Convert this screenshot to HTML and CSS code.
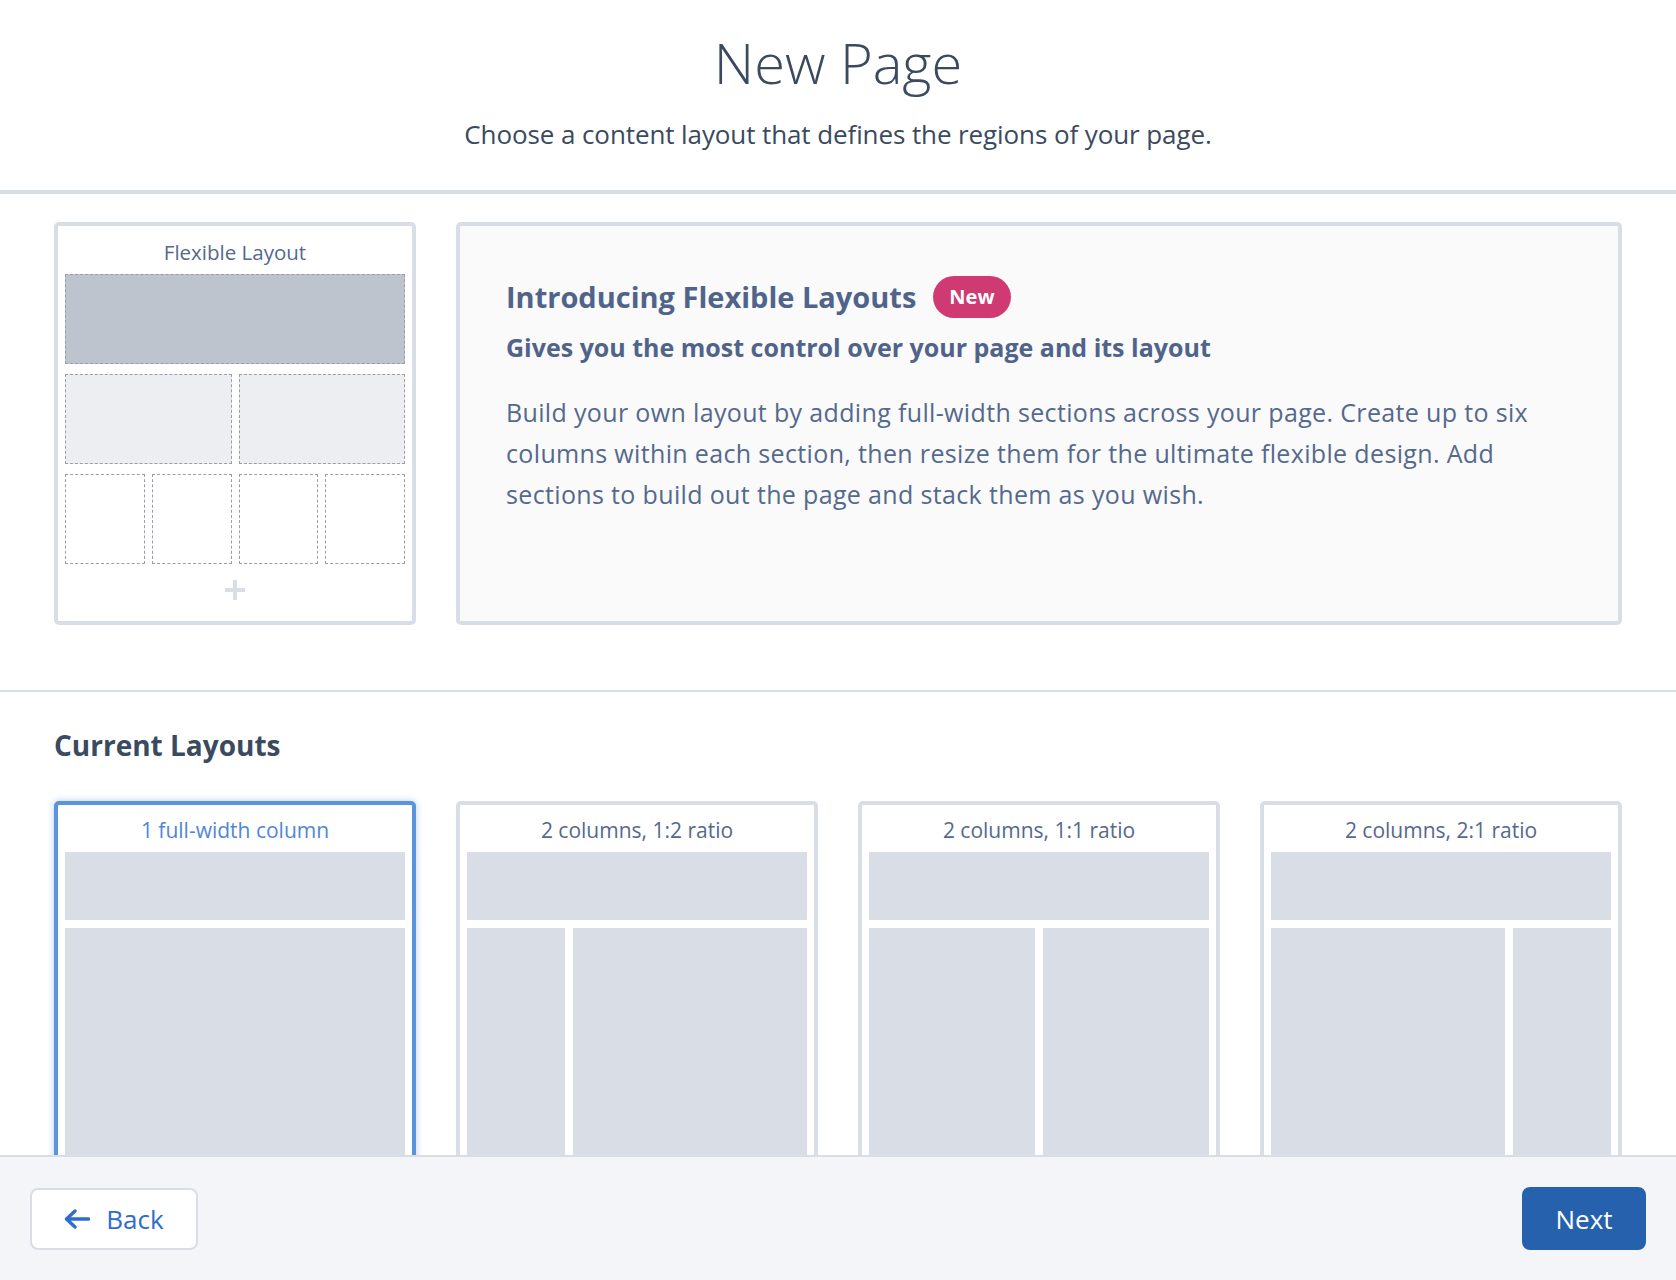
FILE: index.html
```html
<!DOCTYPE html>
<html lang="en">
<head>
<meta charset="utf-8">
<title>New Page</title>
<link rel="stylesheet" href="styles.css">
</head>
<body>
<div class="modal">
  <header class="modal-header">
    <h1 class="title">New Page</h1>
    <p class="subtitle">Choose a content layout that defines the regions of your page.</p>
  </header>

  <main class="modal-body">
    <section class="intro">
      <div class="flex-card">
        <div class="card-label flex-label">Flexible Layout</div>
        <div class="fx-stack">
          <div class="fx fx-dark"></div>
          <div class="fx-row fx-two">
            <div class="fx fx-light"></div>
            <div class="fx fx-light"></div>
          </div>
          <div class="fx-row fx-four">
            <div class="fx"></div>
            <div class="fx"></div>
            <div class="fx"></div>
            <div class="fx"></div>
          </div>
        </div>
        <div class="plus"><span class="plus-h"></span><span class="plus-v"></span></div>
      </div>

      <div class="info-box">
        <div class="info-head">
          <h2 class="info-title">Introducing Flexible Layouts</h2>
          <span class="badge">New</span>
        </div>
        <h3 class="info-sub">Gives you the most control over your page and its layout</h3>
        <p class="info-text">Build your own layout by adding full-width sections across your page. Create up to six columns within each section, then resize them for the ultimate flexible design. Add sections to build out the page and stack them as you wish.</p>
      </div>
    </section>

    <section class="current">
      <h2 class="current-title">Current Layouts</h2>
      <div class="layout-grid">
        <div class="layout-card selected">
          <div class="card-label">1 full-width column</div>
          <div class="lb lb-top"></div>
          <div class="lb-cols cols-one"><div class="lb"></div></div>
        </div>
        <div class="layout-card">
          <div class="card-label">2 columns, 1:2 ratio</div>
          <div class="lb lb-top"></div>
          <div class="lb-cols cols-12"><div class="lb"></div><div class="lb"></div></div>
        </div>
        <div class="layout-card">
          <div class="card-label">2 columns, 1:1 ratio</div>
          <div class="lb lb-top"></div>
          <div class="lb-cols cols-11"><div class="lb"></div><div class="lb"></div></div>
        </div>
        <div class="layout-card">
          <div class="card-label">2 columns, 2:1 ratio</div>
          <div class="lb lb-top"></div>
          <div class="lb-cols cols-21"><div class="lb"></div><div class="lb"></div></div>
        </div>
      </div>
    </section>
  </main>

  <footer class="modal-footer">
    <button class="btn btn-back" type="button">
      <svg class="back-icon" width="26" height="20" viewBox="0 0 26 20" aria-hidden="true">
        <path d="M24.5 10H3" fill="none" stroke="currentColor" stroke-width="3.4" stroke-linecap="round"/>
        <path d="M11 2L2.5 10L11 18" fill="none" stroke="currentColor" stroke-width="3.4" stroke-linecap="round" stroke-linejoin="round"/>
      </svg>
      <span>Back</span>
    </button>
    <button class="btn btn-next" type="button">Next</button>
  </footer>
</div>
</body>
</html>
```

FILE: styles.css
```css
* {
  box-sizing: border-box;
}

html, body {
  margin: 0;
  padding: 0;
  background: #ffffff;
}

body {
  font-family: "Open Sans", Lato, "Liberation Sans", sans-serif;
  color: #3b4a5e;
}

.modal {
  height: 1280px;
  display: flex;
  flex-direction: column;
  overflow: hidden;
}

/* Header */
.modal-header {
  flex: none;
  text-align: center;
  padding: 34px 0 43px;
  border-bottom: 4px solid #d8dde6;
}

.title {
  margin: 0;
  font-size: 56px;
  line-height: 56px;
  font-weight: 300;
  color: #3a4a5f;
}

.subtitle {
  margin: 31px 0 0;
  font-size: 26px;
  line-height: 26px;
  font-weight: 400;
  letter-spacing: -0.1px;
  color: #3a4a5f;
}

/* Body */
.modal-body {
  flex: 1;
  overflow: hidden;
}

.intro {
  display: grid;
  grid-template-columns: repeat(4, 1fr);
  column-gap: 40px;
  padding: 28px 54px 65px;
  border-bottom: 2px solid #d8dde6;
}

.flex-card {
  border: 4px solid #d8dde6;
  border-radius: 5px;
  background: #ffffff;
  padding: 16px 7px 21px;
}

.card-label {
  text-align: center;
  font-size: 21px;
  line-height: 21px;
  color: #54698d;
}

.flex-label {
  font-size: 20.5px;
}

.fx-stack {
  margin-top: 11px;
  display: flex;
  flex-direction: column;
  gap: 10px;
}

.fx-row {
  display: grid;
  column-gap: 7px;
}

.fx-two {
  grid-template-columns: 1fr 1fr;
}

.fx-four {
  grid-template-columns: repeat(4, 1fr);
}

.fx {
  height: 90px;
  border: 1px dashed #989fa9;
  background: #ffffff;
}

.fx-dark {
  background: #bec4cd;
}

.fx-light {
  background: #eceef1;
}

.plus {
  position: relative;
  width: 20px;
  height: 20px;
  margin: 16px auto 0;
}

.plus-h,
.plus-v {
  position: absolute;
  background: #d8dde6;
}

.plus-h {
  left: 0;
  top: 8px;
  width: 20px;
  height: 4px;
}

.plus-v {
  left: 8px;
  top: 0;
  width: 4px;
  height: 20px;
}

.info-box {
  grid-column: 2 / span 3;
  border: 4px solid #d8dde6;
  border-radius: 5px;
  background: #fafafa;
  padding: 50px 48px 40px 46px;
  color: #54698d;
}

.info-head {
  display: flex;
  align-items: center;
  height: 42px;
}

.info-title {
  margin: 0;
  font-size: 29px;
  line-height: 42px;
  font-weight: 700;
  color: #50648a;
}

.badge {
  margin-left: 17px;
  height: 42px;
  padding: 0 16px;
  border-radius: 21px;
  background: #cf3a72;
  color: #ffffff;
  font-size: 20px;
  font-weight: 700;
  line-height: 42px;
}

.info-sub {
  margin: 17px 0 0;
  font-size: 25px;
  line-height: 25px;
  font-weight: 700;
  color: #50648a;
}

.info-text {
  margin: 32px 0 0;
  font-size: 25px;
  line-height: 41px;
  letter-spacing: 0.35px;
  color: #54698d;
}

/* Current layouts */
.current {
  padding: 38px 54px 0;
}

.current-title {
  margin: 0;
  font-size: 28px;
  line-height: 30px;
  font-weight: 700;
  color: #3a4a5f;
}

.layout-grid {
  margin-top: 41px;
  display: grid;
  grid-template-columns: repeat(4, 1fr);
  column-gap: 40px;
}

.layout-card {
  border: 4px solid #d8dde6;
  border-radius: 5px;
  background: #ffffff;
  padding: 15px 7px 0;
  height: 500px;
}

.layout-card.selected {
  border-color: #5b93dc;
  box-shadow: 0 0 7px rgba(91, 147, 220, 0.45);
}

.layout-card.selected .card-label {
  color: #4f87d6;
}

.layout-card .card-label {
  margin-bottom: 11px;
}

.lb {
  background: #d8dde6;
  height: 400px;
}

.lb-top {
  height: 68px;
  margin-bottom: 8px;
}

.lb-cols {
  display: grid;
  column-gap: 8px;
}

.cols-one {
  grid-template-columns: 1fr;
}

.cols-12 {
  grid-template-columns: 97fr 233fr;
}

.cols-11 {
  grid-template-columns: 1fr 1fr;
}

.cols-21 {
  grid-template-columns: 233fr 97fr;
}

/* Footer */
.modal-footer {
  flex: none;
  height: 125px;
  border-top: 2px solid #d8dde6;
  background: #f4f5f9;
  padding: 0 30px;
  display: flex;
  align-items: center;
  justify-content: space-between;
}

.btn {
  font-family: "Open Sans", Lato, "Liberation Sans", sans-serif;
  font-size: 26px;
  line-height: 26px;
  border-radius: 8px;
  cursor: pointer;
}

.btn-back {
  width: 168px;
  height: 62px;
  border: 2px solid #d8dde6;
  background: #ffffff;
  color: #2e6dcc;
  display: flex;
  align-items: center;
  justify-content: center;
  gap: 16px;
  padding: 0;
}

.back-icon {
  display: block;
}

.btn-next {
  width: 124px;
  height: 63px;
  border: none;
  background: #2561ad;
  color: #ffffff;
  padding: 0;
}
```
